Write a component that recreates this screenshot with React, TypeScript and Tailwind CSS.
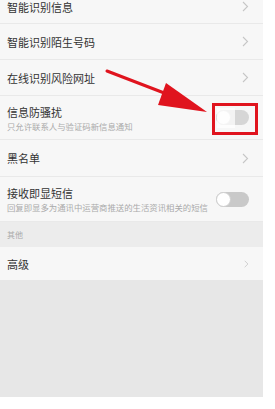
import React from 'react';

const font = { fontFamily: '"Noto Sans CJK SC", "Noto Sans", sans-serif' };

const Chevron: React.FC<{ small?: boolean }> = ({ small }) => (
  <svg width={small ? 5 : 7} height={small ? 8 : 11} viewBox="0 0 7 11" fill="none" className="shrink-0">
    <path d="M1 1l4.5 4.5L1 10" stroke="#c6c6c6" strokeWidth="1.1" />
  </svg>
);

const Toggle: React.FC = () => (
  <div className="w-[33px] h-[15px] rounded-full bg-[#c9c9c9] relative shrink-0">
    <div className="absolute left-0 top-0 w-[15px] h-[15px] rounded-full bg-white border border-[#cfcfcf]" />
  </div>
);

interface RowProps {
  title: string;
  sub?: string;
  right: React.ReactNode;
  className?: string;
}

const Row: React.FC<RowProps> = ({ title, sub, right, className = '' }) => (
  <div className={`flex items-center justify-between pl-[7px] pr-[14px] bg-[#f7f7f7] border-b border-[#e9e9e9] ${className}`}>
    <div className="flex flex-col">
      <span className="text-[11px] leading-[14px] text-[#333]">{title}</span>
      {sub && <span className="text-[8.4px] leading-[10px] mt-[2px] text-[#aaa] whitespace-nowrap">{sub}</span>}
    </div>
    {right}
  </div>
);

export default function App() {
  return (
    <div className="w-[275px] h-[409px] bg-white overflow-hidden relative" style={font}>
      <div className="w-[263px] h-[397px] bg-[#e7e7e7] flex flex-col">
        <Row title="智能识别信息" right={<Chevron />} className="h-[34px] -mt-[10px] shrink-0" />
        <Row title="智能识别陌生号码" right={<Chevron />} className="h-[36px] shrink-0" />
        <Row title="在线识别风险网址" right={<Chevron />} className="h-[36px] shrink-0" />
        <Row
          title="信息防骚扰"
          sub="只允许联系人与验证码新信息通知"
          right={
            <div className="opacity-70">
              <Toggle />
            </div>
          }
          className="h-[44px] shrink-0"
        />
        <Row title="黑名单" right={<Chevron />} className="h-[37px] shrink-0" />
        <Row
          title="接收即显短信"
          sub="回复即显多为通讯中运营商推送的生活资讯相关的短信"
          right={<Toggle />}
          className="h-[45px] shrink-0"
        />
        <div className="h-[25px] shrink-0 bg-[#ececec] pl-[7px] flex items-center">
          <span className="text-[8px] text-[#aaa]">其他</span>
        </div>
        <Row title="高级" right={<Chevron small />} className="h-[33px] shrink-0 border-b-0" />
      </div>

      {/* red highlight box */}
      <div className="absolute left-[212px] top-[103px] w-[46px] h-[32px] border-[3px] border-[#e0141e]">
        <div className="absolute left-[2px] top-[2px] w-[18px] h-[20px] bg-white/70" />
      </div>

      {/* red arrow */}
      <svg className="absolute left-0 top-0 pointer-events-none" width="275" height="409">
        <line x1="107" y1="71" x2="172" y2="96" stroke="#e0141e" strokeWidth="3" strokeLinecap="round" />
        <polygon points="207,112 166,83 158,105" fill="#e0141e" />
      </svg>
    </div>
  );
}
